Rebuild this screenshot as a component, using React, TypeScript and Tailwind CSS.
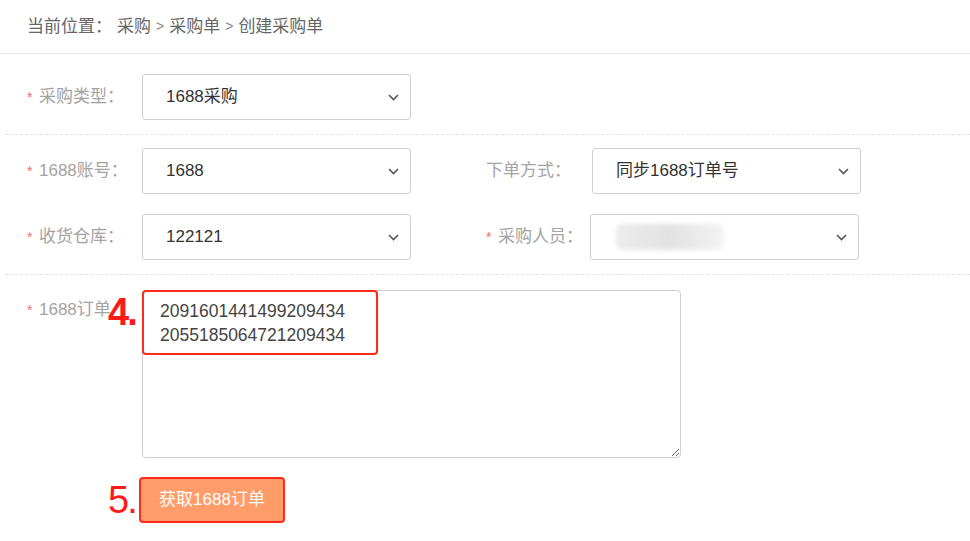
const fontStack = "font-['Liberation_Sans','Noto_Sans_CJK_SC',sans-serif]"

function Chevron() {
  return (
    <svg width="11" height="7" viewBox="0 0 11 7" fill="none">
      <path d="M1 1l4.5 4.5L10 1" stroke="#555" strokeWidth="1.6" />
    </svg>
  )
}

function Label({ text, required, width, star = true }: { text: string; required?: boolean; width: string; star?: boolean }) {
  return (
    <div className={`${width} shrink-0 flex items-center text-[17px] text-[#a3a3a3]`}>
      {star && <span className={`w-[12px] text-[14px] text-[#f56c6c] ${required ? '' : 'invisible'}`}>*</span>}
      <span>{text}</span>
    </div>
  )
}

function Select({ value, children }: { value?: string; children?: React.ReactNode }) {
  return (
    <div className="w-[269px] h-[46px] shrink-0 border border-[#cfcfcf] rounded-[3px] flex items-center justify-between pl-[23px] pr-[11px] text-[17px] text-[#333]">
      {children ?? <span>{value}</span>}
      <Chevron />
    </div>
  )
}

export default function App() {
  return (
    <div className={`w-[970px] h-[541px] bg-white overflow-hidden ${fontStack}`}>
      <div className="h-[54px] border-b border-[#e6e6e6] pl-[27px] flex items-center text-[17px] text-[#666]">
        <span>当前位置：</span>
        <span className="ml-[5px]">采购</span>
        <span className="mx-[5px] text-[14px] text-[#888]">&gt;</span>
        <span>采购单</span>
        <span className="mx-[5px] text-[14px] text-[#888]">&gt;</span>
        <span>创建采购单</span>
      </div>

      <div className="ml-[5px] border-b border-dashed border-[#e3e3e3] pt-[20px] pb-[14px] pl-[22px]">
        <div className="flex items-center">
          <Label text="采购类型：" required width="w-[115px]" />
          <Select value="1688采购" />
        </div>
      </div>

      <div className="ml-[5px] border-b border-dashed border-[#e3e3e3] pt-[13px] pb-[14px] pl-[22px] flex flex-col gap-[20px]">
        <div className="flex items-center">
          <Label text="1688账号：" required width="w-[115px]" />
          <Select value="1688" />
          <div className="ml-[75px] flex items-center">
            <Label text="下单方式：" star={false} width="w-[106px]" />
            <Select value="同步1688订单号" />
          </div>
        </div>
        <div className="flex items-center">
          <Label text="收货仓库：" required width="w-[115px]" />
          <Select value="122121" />
          <div className="ml-[75px] flex items-center">
            <Label text="采购人员：" required width="w-[104px]" />
            <Select>
              <div className="ml-[2px] w-[108px] h-[26px] bg-gradient-to-r from-[#ececec] via-[#e2e2e2] to-[#f3f3f3] blur-[2px] rounded-[6px]" />
            </Select>
          </div>
        </div>
      </div>

      <div className="ml-[5px] pt-[15px] pl-[22px]">
        <div className="flex items-start">
          <div className="mt-[8px] leading-[24px]">
            <Label text="1688订单" required width="w-[115px]" />
          </div>
          <div className="relative">
            <textarea
              readOnly
              defaultValue={'2091601441499209434\n2055185064721209434'}
              className="block w-[539px] h-[168px] border border-[#cfcfcf] rounded-[4px] pl-[17px] pt-[8px] text-[17.5px] leading-[24px] text-[#444] outline-none"
            />
            <div className="absolute left-0 top-0 w-[236px] h-[65px] border-2 border-[#ff2a1a] rounded-[4px] pointer-events-none" />
            <span className="absolute -left-[34px] top-[3px] text-[38px] leading-none font-bold text-[#ff1a1a] tracking-[-2px]">4.</span>
          </div>
        </div>

        <div className="mt-[19px] ml-[112px] relative">
          <span className="absolute -left-[31px] top-[4px] text-[38px] leading-none text-[#ff1a1a] tracking-[-2px]">5.</span>
          <button className="w-[146px] h-[46px] bg-[#ff9c6a] border-2 border-[#ff2a1a] rounded-[4px] text-white text-[17px]">
            获取1688订单
          </button>
        </div>
      </div>
    </div>
  )
}
